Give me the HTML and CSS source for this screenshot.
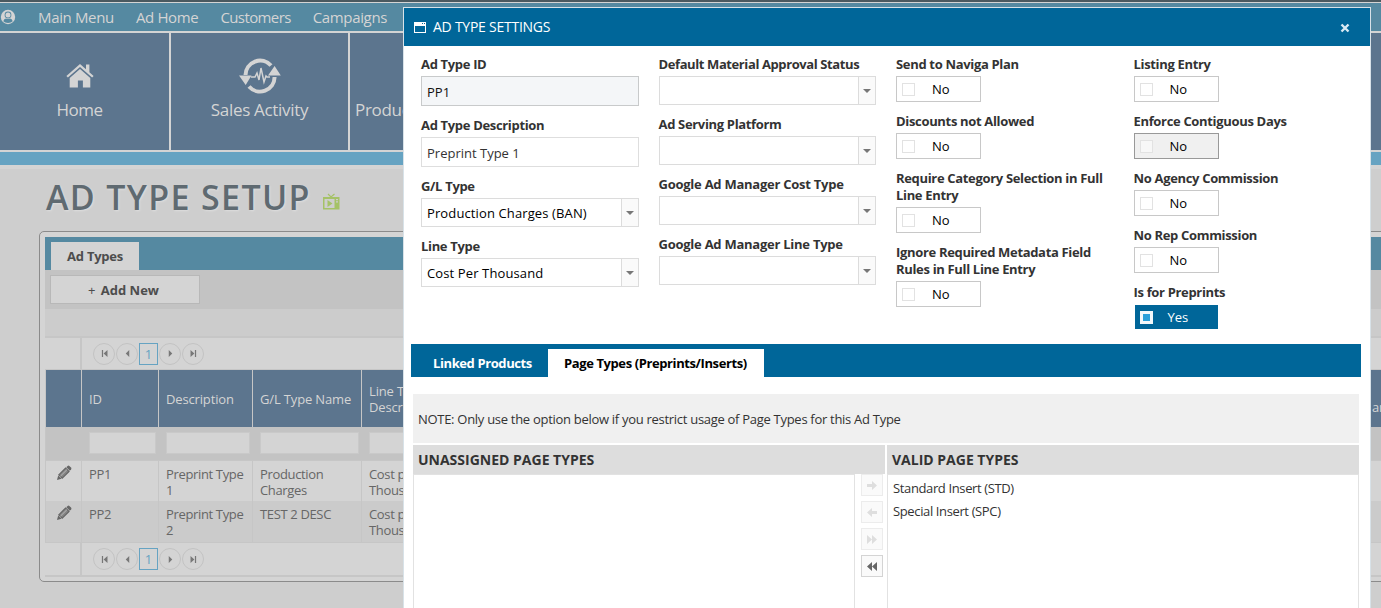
FILE: index.html
```html
<!DOCTYPE html>
<html lang="en">
<head>
<meta charset="utf-8">
<title>Ad Type Setup</title>
<link rel="stylesheet" href="styles.css">
</head>
<body>
<svg class="defs" width="0" height="0">
  <symbol id="pencil" viewBox="0 0 16 16"><path fill="#666" d="M1 15l1.2-4.6 3.4 3.4z"/><path fill="#858585" stroke="#666" stroke-width="1.2" d="M2.8 9.8L9.6 3l3.4 3.4-6.8 6.8z"/><path stroke="#c4c4c4" stroke-width=".8" d="M4.4 11.2L11 4.6"/><path fill="#666" d="M10.3 2.2l1.3-1.3q.9-.7 1.8.1l1.6 1.6q.8.9.1 1.8l-1.3 1.3z"/></symbol>
  <symbol id="first" viewBox="0 0 8 8"><path fill="#777" d="M1 0h1.4v8H1zM7.4 0v8L3 4z"/></symbol>
  <symbol id="prev" viewBox="0 0 8 8"><path fill="#777" d="M6 0v8L2 4z"/></symbol>
  <symbol id="next" viewBox="0 0 8 8"><path fill="#777" d="M2 0v8l4-4z"/></symbol>
  <symbol id="last" viewBox="0 0 8 8"><path fill="#777" d="M5.6 0H7v8H5.6zM.6 0v8L5 4z"/></symbol>
</svg>

<div class="page">
  <nav class="menu">
    <svg class="user" width="16" height="16" viewBox="0 0 16 16"><circle cx="8" cy="8" r="7.2" fill="#d4d4d4"/><circle cx="8" cy="6" r="3.400" fill="#5589a1"/><circle cx="8" cy="6" r="2.500" fill="#d4d4d4"/><path fill="#5589a1" d="M3.300 12.200q.7-2.400 2.700-2.700 2 1 4 0 2 .3 2.700 2.700Q11 14 8 14t-4.700-1.800z"/></svg>
    <a>Main Menu</a><a>Ad Home</a><a class="customers">Customers</a><a>Campaigns</a>
  </nav>
  <div class="tiles">
    <div class="tile home">
      <svg width="28" height="24" viewBox="0 0 28 24"><path fill="#d4d4d4" d="M14 0l6 5.2V.4h3.4v7.8L27.6 12l-1.5 1.5L14 3 1.900 13.500.4 12zM14 5l10.300 9v9.400h-7.400v-6.800h-5v6.800H3.700V14z"/></svg>
      <span>Home</span>
    </div>
    <div class="tile sales">
      <svg width="42" height="36" viewBox="0 0 42 36"><g fill="none" stroke="#d4d4d4"><path stroke-width="4" d="M6.500 17A14.600 14.600 0 0 1 32 7.500M35.600 19A14.600 14.600 0 0 1 10 28.500"/><path stroke-width="1.500" d="M12 19h4l2-4 2 7 2-12 3 14 2-6 1 1h3"/></g><path fill="#d4d4d4" d="M0 17.500h12.500L6.700 27zM29 17.500h12.800L35.600 8z"/></svg>
      <span>Sales Activity</span>
    </div>
    <div class="tile production"><span>Production</span></div>
  </div>
  <div class="strip"></div>
  <main class="content">
    <div class="heading">
      <h1>AD TYPE SETUP</h1>
      <svg width="17" height="17" viewBox="0 0 17 17"><path fill="none" stroke="#a5c267" stroke-width="1.200" d="M5 1l3 3 3.500-3"/><path fill="#a5c267" fill-rule="evenodd" d="M0 4h16.500v12.500H0zM1.500 6v9h10V6zM13 6v1.200h2V6zM13 8.200v1.200h2V8.200z"/><path fill="#a5c267" d="M4.500 7l5 3.500-5 3.500z"/></svg>
    </div>
    <section class="panel">
      <div class="bar"><div class="bar-tab">Ad Types</div></div>
      <div class="tools"><div class="add"><i>+</i> Add New</div></div>
      <div class="band"></div>
      <div class="pager">
        <div class="gutter"></div>
        <span class="pg"><svg><use href="#first"/></svg></span><span class="pg"><svg><use href="#prev"/></svg></span><b class="num">1</b><span class="pg"><svg><use href="#next"/></svg></span><span class="pg"><svg><use href="#last"/></svg></span>
      </div>
      <div class="row head"><div></div><div>ID</div><div>Description</div><div>G/L Type Name</div><div>Line Type<br>Description</div><div class="far">an</div></div>
      <div class="row filter"><div></div><div><i></i></div><div><i></i></div><div><i></i></div><div><i></i></div><div></div></div>
      <div class="row data"><div><svg class="pen"><use href="#pencil"/></svg></div><div>PP1</div><div>Preprint Type<br>1</div><div>Production<br>Charges</div><div>Cost per<br>Thousand</div><div></div></div>
      <div class="row data alt"><div><svg class="pen"><use href="#pencil"/></svg></div><div>PP2</div><div>Preprint Type<br>2</div><div>TEST 2 DESC</div><div>Cost per<br>Thousand</div><div></div></div>
      <div class="pager bottom">
        <div class="gutter"></div>
        <span class="pg"><svg><use href="#first"/></svg></span><span class="pg"><svg><use href="#prev"/></svg></span><b class="num">1</b><span class="pg"><svg><use href="#next"/></svg></span><span class="pg"><svg><use href="#last"/></svg></span>
      </div>
    </section>
  </main>
</div>

<div class="modal">
  <header>
    <svg width="12" height="11" viewBox="0 0 12 11"><path fill="#fff" fill-rule="evenodd" d="M0 0h12v11H0zM1 4v6h10V4zM8 1v1h1V1zM10 1v1h1V1z"/></svg>
    <span>AD TYPE SETTINGS</span>
    <svg class="close" width="10" height="10" viewBox="0 0 10 10"><path stroke="#d9eaf4" stroke-width="2.400" d="M1.500 1.500l7 7M8.500 1.500l-7 7"/></svg>
  </header>
  <div class="form">
    <div class="col">
      <label>Ad Type ID</label><div class="input locked">PP1</div>
      <label>Ad Type Description</label><div class="input">Preprint Type 1</div>
      <label>G/L Type</label><div class="select"><span>Production Charges (BAN)</span><i></i></div>
      <label>Line Type</label><div class="select"><span>Cost Per Thousand</span><i></i></div>
    </div>
    <div class="col">
      <label class="tight">Default Material Approval Status</label><div class="select"><span></span><i></i></div>
      <label>Ad Serving Platform</label><div class="select"><span></span><i></i></div>
      <label class="loose">Google Ad Manager Cost Type</label><div class="select"><span></span><i></i></div>
      <label class="loose">Google Ad Manager Line Type</label><div class="select"><span></span><i></i></div>
    </div>
    <div class="col">
      <label>Send to Naviga Plan</label><div class="toggle"><i></i>No</div>
      <label>Discounts not Allowed</label><div class="toggle"><i></i>No</div>
      <label>Require Category Selection in Full<br>Line Entry</label><div class="toggle"><i></i>No</div>
      <label>Ignore Required Metadata Field<br>Rules in Full Line Entry</label><div class="toggle"><i></i>No</div>
    </div>
    <div class="col">
      <label>Listing Entry</label><div class="toggle"><i></i>No</div>
      <label>Enforce Contiguous Days</label><div class="toggle hover"><i></i>No</div>
      <label>No Agency Commission</label><div class="toggle"><i></i>No</div>
      <label>No Rep Commission</label><div class="toggle"><i></i>No</div>
      <label>Is for Preprints</label><div class="toggle on"><i></i>Yes</div>
    </div>
  </div>
  <div class="tabs"><div class="tab">Linked Products</div><div class="tab active">Page Types (Preprints/Inserts)</div></div>
  <div class="note">NOTE: Only use the option below if you restrict usage of Page Types for this Ad Type</div>
  <div class="transfer">
    <div class="side">
      <h2>UNASSIGNED PAGE TYPES</h2>
      <div class="split">
        <div class="list"></div>
        <div class="moves">
          <div class="move off"><svg width="10" height="9" viewBox="0 0 10 9"><path d="M0 3h5V0l5 4.500L5 9V6H0z"/></svg></div>
          <div class="move off"><svg width="10" height="9" viewBox="0 0 10 9"><path d="M10 3H5V0L0 4.500 5 9V6h5z"/></svg></div>
          <div class="move off"><svg width="10" height="9" viewBox="0 0 10 9"><path d="M0 0l5 4.500L0 9zM5 0l5 4.500L5 9z"/></svg></div>
          <div class="move"><svg width="10" height="9" viewBox="0 0 10 9"><path d="M5 0L0 4.500 5 9zM10 0L5 4.500 10 9z"/></svg></div>
        </div>
      </div>
    </div>
    <div class="side">
      <h2>VALID PAGE TYPES</h2>
      <div class="list full"><p>Standard Insert (STD)</p><p>Special Insert (SPC)</p></div>
    </div>
  </div>
</div>
</body>
</html>
```
FILE: styles.css
```css
* { box-sizing: border-box; }
body { margin: 0; width: 1381px; height: 608px; overflow: hidden; position: relative; font-family: "Open Sans", "Noto Sans", sans-serif; font-size: 13px; color: #333; }
i { font-style: normal; }
.defs { position: absolute; }
svg { flex: none; display: block; }

.page { width: 1381px; height: 608px; overflow: hidden; background: #cecece; }
.menu { height: 33px; border-top: 2px solid #4a5960; border-bottom: 2px solid #d4d4d4; background: #5589a1; box-shadow: inset 0 1px #d4d4d4; display: flex; align-items: center; color: #d4d4d4; font-size: 15px; letter-spacing: -.35px; }
.user { margin-right: 22px; }
.menu a { margin-right: 22px; }
.menu .customers { letter-spacing: -.6px; }
.tiles { display: flex; gap: 2px; height: 119px; background: #d4d4d4; border-bottom: 2px solid #d4d4d4; }
.tile { background: #5c758e; width: 177px; display: flex; flex-direction: column; align-items: center; color: #d4d4d4; font-size: 17px; line-height: 24px; letter-spacing: -.3px; }
.tile.home { width: 169px; padding: 31px 10px 0 0; letter-spacing: -.5px; }
.tile.home span { margin-top: 10px; }
.tile.sales { padding: 25px 0 0 0; }
.tile.sales span { margin-top: 4px; }
.tile.production { width: 1031px; align-items: flex-start; padding: 65px 0 0 5px; }
.strip { height: 17px; background: #66a3c2; border-bottom: 4px solid #d4d4d4; }
.heading { display: flex; height: 62px; padding-left: 46px; }
.heading svg { margin: 24px 0 0 13px; }
h1 { margin: 4px 0 0; width: 264px; font-size: 34px; line-height: 48px; font-weight: 600; color: #5f6a71; letter-spacing: 1.35px; white-space: nowrap; text-shadow: 1px 1px 2px #dedede; }
.panel { margin-left: 39px; width: 1400px; height: 351px; border: 1px solid #8b8b8b; border-radius: 5px; background: #d4d4d4; padding: 5px; }
.bar { height: 33px; background: #5589a1; padding: 5px 0 0 6px; }
.bar-tab { width: 88px; height: 28px; background: #d4d4d4; text-align: center; line-height: 28px; font-weight: 700; letter-spacing: -.25px; color: #4d4d4d; }
.tools { height: 39px; background: #c3c3c3; padding: 5px; }
.add { width: 150px; height: 29px; border: 1px solid #b8b8b8; background: #d4d4d4; text-align: center; line-height: 28px; font-weight: 700; color: #4d4d4d; padding-right: 3px; }
.add i { font-weight: 400; margin-right: 2px; }
.band { height: 29px; background: #ccc; border-bottom: 2px solid #c6c6c6; }
.pager { height: 32px; display: flex; align-items: center; border-bottom: 1px solid #c6c6c6; }
.gutter { width: 37px; align-self: stretch; border-right: 2px solid #c6c6c6; margin-right: 11px; }
.pg { width: 22px; height: 22px; border: 1px solid #c3c3c3; border-radius: 50%; display: flex; align-items: center; justify-content: center; margin-right: 1px; }
.pg svg { width: 7px; height: 7px; }
.num { width: 19px; height: 22px; border: 1px solid #66a3c2; color: #66a3c2; font-weight: 400; text-align: center; line-height: 20px; margin-right: 1px; }
.row { display: grid; grid-template-columns: 35px 77px 94px 109px 961px 100px; border-left: 1px solid #c6c6c6; }
.row > div { border-left: 1px solid #c6c6c6; padding-left: 7px; line-height: 16px; letter-spacing: -.35px; }
.row > div:first-child { border-left: 0; }
.head { height: 57px; background: #5c758e; color: #d4d4d4; align-items: stretch; }
.row.head > div { display: flex; align-items: center; letter-spacing: -.15px; }
.row.head > div.far { border-left: 0; padding-left: 50px; padding-top: 16px; }
.filter { height: 34px; background: #c3c3c3; border-bottom: 1px solid #c6c6c6; padding-top: 5px; }
.row.filter > div { border-left-color: transparent; }
.filter i { display: block; height: 22px; background: #d4d4d4; border: 1px solid #c9c9c9; margin-right: 2px; }
.data { height: 40px; color: #666; }
.row.data > div { padding-top: 5px; }
.alt { height: 42px; background: #cbcbcb; border-bottom: 1px solid #c6c6c6; }
.row.data > div:first-child { padding: 4px 0 0 10px; }
.pen { width: 16px; height: 16px; }
.pager.bottom { height: 34px; border-bottom: 2px solid #c6c6c6; }

.modal { position: absolute; left: 403px; top: 7px; width: 968px; height: 601px; overflow: hidden; background: #fff; border: 1px solid #d8e2e8; border-bottom: 0; }
.modal header { height: 38px; background: #006699; color: #fff; display: flex; align-items: center; padding: 0 20px 0 10px; font-size: 14px; }
.modal header span { margin: -2px 0 0 7px; letter-spacing: -.25px; }
.close { margin-left: auto; margin-top: 2px; }
.form { display: grid; grid-template-columns: repeat(4, 217.5px); column-gap: 20px; padding: 10px 0 0 17px; height: 298px; font-size: 13px; }
label { display: block; line-height: 17px; font-weight: 700; color: #333; margin-bottom: 3px; white-space: nowrap; letter-spacing: -.33px; }
label.tight { letter-spacing: -.4px; }
label.loose { letter-spacing: -.25px; }
.input { height: 30px; border: 1px solid #dedede; padding-left: 5px; line-height: 31px; margin-bottom: 11px; }
.locked { background: #f4f6f8; border-color: #c8cacb; color: #111; }
.select { height: 29px; border: 1px solid #dcdcdc; display: flex; margin-bottom: 11px; color: #000; line-height: 28px; letter-spacing: .12px; }
.select span { flex: 1; padding-left: 5px; }
.select i { width: 17px; border-left: 1px solid #dcdcdc; background: #fafafa; display: flex; align-items: center; justify-content: center; }
.select i::after { content: ""; border: 4px solid transparent; border-top-color: #777; border-bottom: 0; }
.toggle { width: 85px; height: 26px; border: 1px solid #c8c8c8; display: flex; align-items: center; padding-left: 5px; margin-bottom: 11px; color: #000; line-height: 24px; }
.toggle i { width: 13px; height: 13px; border: 1px solid #e2e2e2; margin-right: 17px; background: #fff; }
.toggle.hover { background: #f0f0f0; border-color: #999; }
.toggle.hover i { background: #f7f7f7; }
.toggle.on { background: #006699; background-clip: padding-box; border-color: transparent; color: #fff; }
.toggle.on i { border: 3px solid #f2f8fb; background: #2aa0da; margin-right: 15px; }
.tabs { height: 33px; margin: 0 9px 0 7px; background: #006699; display: flex; align-items: flex-end; font-weight: 700; line-height: 28px; }
.tab { width: 137px; padding-left: 22px; color: #fff; height: 28px; white-space: nowrap; letter-spacing: -.4px; }
.tab.active { width: 216px; padding-left: 16px; background: #fff; color: #000; }
.note { margin: 17px 11px 2px 9px; height: 49px; line-height: 51px; background: #f0f0f0; padding-left: 5px; letter-spacing: -.29px; }
.transfer { display: grid; grid-template-columns: 472px 472px; gap: 2px; margin-left: 9px; }
h2 { margin: 0; height: 29px; line-height: 30px; padding-left: 5px; background: #ddd; font-size: 14px; }
.split { display: flex; }
.list { width: 442px; height: 170px; border: 1px solid #e2e2e2; letter-spacing: -.37px; }
.full { width: 472px; padding: 2px 5px; }
p { margin: 0; line-height: 23px; }
.moves { padding-left: 6px; display: flex; flex-direction: column; gap: 5px; }
.move { width: 22px; height: 22px; border: 1px solid #d4d4d4; background: #fafafa; fill: #666; display: flex; align-items: center; justify-content: center; }
.off { border-color: #ececec; fill: #dedede; }
```
